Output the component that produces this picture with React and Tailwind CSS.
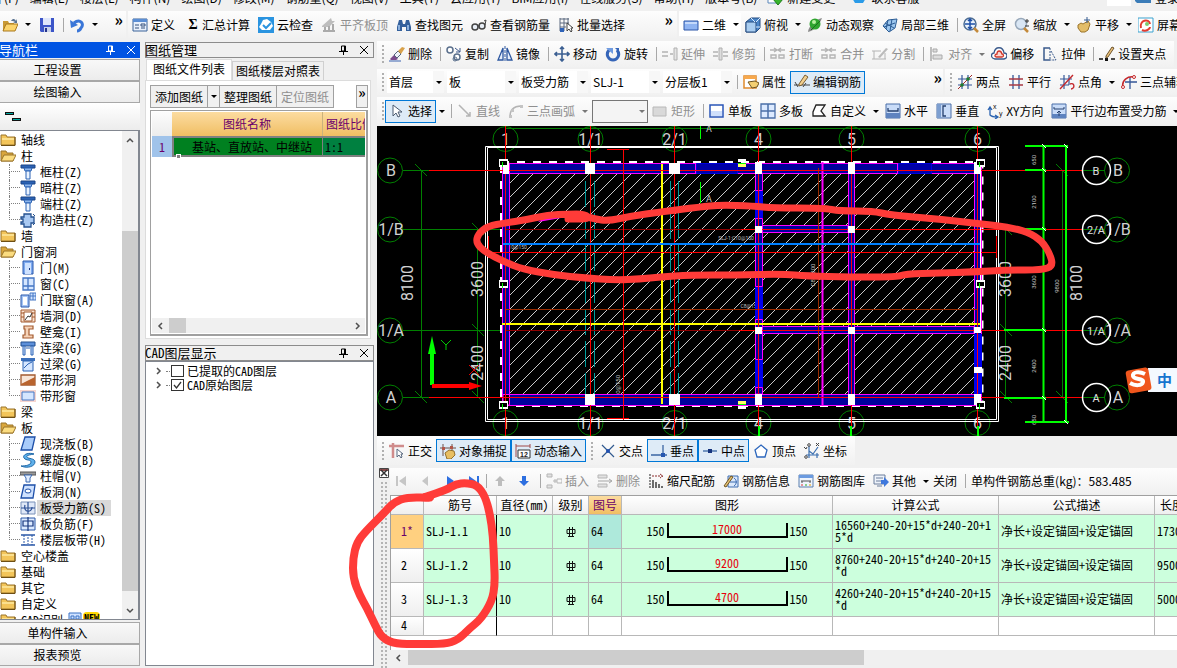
import { useState } from "react";

const UI_FONT = "font-['Noto_Sans_CJK_SC',sans-serif]";
const GRID_FONT = "font-['Noto_Sans_Mono_CJK_SC','Noto_Sans_CJK_SC',monospace]";

// 16x16 toolbar and tree glyphs
const ICONS = {
  open: <><path d="M1 4h5l1 2h5v8H1z" fill="#c99a35" /><path d="M1 14l3-7h12l-3 7z" fill="#fbd46c" stroke="#a9781c" /><path d="M9 4c2-3 4-2 5 0l1-2v4h-4l2-1c-1-1-2-1-4-1z" fill="#5a7391" /></>,
  save: <><path d="M1 1h14v14H2l-1-1z" fill="#3c55c8" /><path d="M4 1h8v7H4z" fill="#dfe6fa" /><path d="M5 10h7v5H5z" fill="#c9d2ea" /><path d="M6 11h2v4H6z" fill="#26348c" /></>,
  undo: <><path d="M5 6c6-5 11 1 7 5-1 2-3 3-4 3" fill="none" stroke="#3a76d8" strokeWidth="3" /><path d="M1 3l1 8 7-3z" fill="#3a76d8" /></>,
  define: <><path d="M1 2h14v12H1z" fill="#e8f0fb" stroke="#3b6298" /><path d="M1 2h14v3H1z" fill="#5b8ed4" /><path d="M3 8h4M3 11h4M9 7h4v2H9zM9 11h4" fill="none" stroke="#35507c" /></>,
  cloud: <><path d="M0 0h16v16H0z" fill="#2a94e0" /><path d="M4 13l-3-3 2-3 2-4 4-1 4 3 2 4-3 4z" fill="#fff" /><path d="M5 8l3 3 5-5" fill="none" stroke="#2a94e0" strokeWidth="2" /></>,
  flat: <><path d="M1 9l9-8 1 3h3l-6 6H1z" fill="#bdbdbd" /><path d="M4 10v4M8 9v6M12 7v8M2 14h12" stroke="#aaa" strokeWidth="2" /></>,
  find: <><path d="M3 3h3l1 4h2l1-4h3l2 7v4h-5v-4H6v4H1v-4z" fill="#34609c" /><path d="M3 8v5M12 8v5" stroke="#8bb0dd" strokeWidth="2" /></>,
  glasses: <><circle cx="4" cy="10" r="3" fill="#e8eef6" stroke="#444" strokeWidth="1.5" /><circle cx="11" cy="9" r="3" fill="#e8eef6" stroke="#444" strokeWidth="1.5" /><path d="M7 9h2M14 8l1-5-2 1" fill="none" stroke="#444" /></>,
  batch: <><path d="M2 2h9M2 6h9M2 10h6M2 1v13M6 1v13M10 1v6" fill="none" stroke="#5c6b80" /><path d="M2 11h4v4H2z" fill="#2e62b8" /><path d="M9 6v8l2-2 2 3 1-1-1-3h2z" fill="#fff" stroke="#444" /></>,
  plane: <><path d="M1 4h14v9H1z" fill="#8fb4f2" stroke="#2d56a8" /><path d="M2 5h12v2H2z" fill="#c4d9fb" /></>,
  cube: <><path d="M1 5l5-4h9v10l-4 4H1z" fill="#4b86c8" stroke="#274d80" /><path d="M1 5h10v10H1z" fill="#a9cdf0" stroke="#274d80" /><path d="M11 5l4-4M6 1l4 4M11 10h4" fill="none" stroke="#d6ebff" /></>,
  orbit: <><path d="M1 15c0-5 8-13 14-14-2 6-8 13-14 14z" fill="#8a8a8a" /><circle cx="8" cy="7" r="5.500" fill="#2fa52f" /><circle cx="7" cy="5" r="2" fill="#b8f0a0" /><path d="M4 13l9-9" stroke="#1b6f1b" /></>,
  part3d: <><path d="M1 9l5-6 9-1-2 9-6 4z" fill="#9cc6ee" stroke="#2a5b94" /><path d="M3 6l9 5M6 3l-2 9M10 2l-2 12M2 10l11-4" fill="none" stroke="#2a5b94" /></>,
  full: <><circle cx="7" cy="7" r="6" fill="#eaf2fb" stroke="#4d6d94" strokeWidth="1.500" /><path d="M7 2v10M2 7h10M5 4l2-2 2 2M5 10l2 2 2-2" fill="none" stroke="#1d4fa8" strokeWidth="1.500" /><path d="M11 11l4 4" stroke="#c48a3a" strokeWidth="2.500" /></>,
  zoom: <><circle cx="7" cy="7" r="5.500" fill="#d9e6f4" stroke="#98a8ba" strokeWidth="1.500" /><path d="M10 11l4 4" stroke="#c48a3a" strokeWidth="2.500" /><path d="M13 2v4M11 4h4M11 9h4" stroke="#333" /></>,
  hand: <><path d="M2 8l3-2 2 1 5-3 2 3-2 6-3 2H5l-3-4z" fill="#e3bd68" stroke="#9a742b" /><path d="M11 0v6M8 3h6" stroke="#355b8f" /></>,
  rotscr: <><path d="M0 1h15v14H0z" fill="#fff" stroke="#3ba2cf" /><path d="M3 11c-2-8 8-10 9-4M4 13c4 2 8-1 8-3" fill="none" stroke="#e23b30" strokeWidth="2" /><circle cx="9" cy="7" r="2" fill="#7bc96f" /></>,
  erase: <><path d="M1 13l4-4 4 4-2 1H2z" fill="#7d4b8c" /><path d="M5 9l4-4 3 3-4 4z" fill="#f0f3f8" stroke="#55647d" /><path d="M9 5l4-4 3 1-4 6z" fill="#d9a24b" /><path d="M0 15h12" stroke="#3a62b0" /></>,
  copy: <><circle cx="4" cy="4" r="3" fill="#fff" stroke="#5a6f8c" strokeWidth="1.500" /><circle cx="11" cy="11" r="3" fill="#fff" stroke="#5a6f8c" strokeWidth="1.500" /><circle cx="9" cy="13" r="2" fill="none" stroke="#5a6f8c" /><path d="M9 2l5 4M14 2v4h-4" fill="none" stroke="#3b568a" /></>,
  mirror: <><path d="M6 2v12H1zM10 2v12h5z" fill="#e6eefb" stroke="#2d57a0" strokeWidth="1.300" /><path d="M8 0v16" stroke="#2d57a0" strokeDasharray="3 1" /></>,
  move: <path d="M8 1v14M1 8h14M6 3l2-2 2 2M6 13l2 2 2-2M3 6L1 8l2 2M13 6l2 2-2 2" fill="none" stroke="#3b5f92" strokeWidth="1.600" />,
  rotate: <><path d="M4 4c-4 5 0 10 4 10s8-5 4-10" fill="none" stroke="#3565b8" strokeWidth="3" /><path d="M1 2h7v6z" fill="#6f9be0" /><path d="M10 2h4v4z" fill="#3565b8" /></>,
  extend: <><path d="M0 6h6M0 10h6M8 8h3" stroke="#b2b2b2" strokeWidth="1.500" /><path d="M12 2h3v12h-3z" fill="#e4e4e4" stroke="#b0b0b0" /></>,
  trim: <><path d="M0 6h5M0 10h5M10 6h5M10 10h5" stroke="#b2b2b2" strokeWidth="1.500" /><path d="M6 2h3v12H6z" fill="#ddd" stroke="#b0b0b0" /></>,
  brk: <path d="M0 4h6M4 2l3 2-3 2M9 4h6M11 2L8 4l3 2M1 9h5v3H1zM9 9h5v3H9z" fill="none" stroke="#b4b4b4" strokeWidth="1.400" />,
  split: <><path d="M0 5h9M0 13h14M2 5v8M13 7v6" stroke="#b4b4b4" /><path d="M6 11l8-9 2 1-8 9z" fill="#bbb" /></>,
  align: <><path d="M2 1v14" stroke="#aaa" strokeWidth="1.500" /><path d="M4 3h4v3H4zM4 9h9v4H4z" fill="#ddd" stroke="#aaa" /></>,
  offset: <><path d="M4 13c-5-1-4-6-1-6 1-7 9-7 10 0 4 0 4 5 0 6z" fill="#fff" stroke="#3a5a8c" strokeWidth="1.300" /><path d="M5 11c-2-1-1-3 1-3 0-4 4-4 5 0 2 0 2 3 0 3z" fill="#fbd6d0" stroke="#d0382c" strokeWidth="1.300" /></>,
  stretch: <><path d="M8 2H2v12h6" fill="none" stroke="#3a5a8c" strokeWidth="1.500" /><path d="M8 2v12M9 5l5 9H8" fill="none" stroke="#3a5a8c" strokeDasharray="2 1" /></>,
  grip: <><path d="M0 13h4M12 13h4" stroke="#111" strokeWidth="1.500" /><path d="M6 12h3v3H6z" fill="#111" /><path d="M7 10l6-9 2 1-6 9-2 1z" fill="#edc37c" stroke="#6b532c" /></>,
  prop: <><path d="M1 2h12v12H1z" fill="#fff" stroke="#e08a2c" strokeWidth="1.500" /><path d="M1 2h12v3H1z" fill="#f7a84c" /><path d="M5 8l7-1 4 2-2 4-5 1z" fill="#f3cf72" stroke="#6c5220" /></>,
  edit: <><path d="M0 11h16M1 8l3 5M9 13l3-4" fill="none" stroke="#444" /><path d="M5 10l6-9 3 2-6 8-3 1z" fill="#f2cf8e" stroke="#7a5f34" /></>,
  two: <><path d="M5 1v14M11 1v14M1 5h14M1 11h14" stroke="#355798" strokeWidth="1.200" /><path d="M1 15L15 1" stroke="#a02828" /><circle cx="5" cy="11" r="1.800" fill="#1c7a2c" /><circle cx="11" cy="5" r="1.800" fill="#1c7a2c" /></>,
  parallel: <><path d="M5 1v14M11 1v14" stroke="#355798" strokeWidth="1.300" /><path d="M1 5h14M1 11h14" stroke="#a83a44" strokeWidth="1.300" /></>,
  angle: <><path d="M5 1v14M10 1v10M1 5h12M1 11h9" stroke="#355798" strokeWidth="1.200" /><path d="M1 15L14 1M11 10c5-2 5 5 1 5" fill="none" stroke="#c5282c" strokeWidth="1.400" /></>,
  three: <><path d="M9 3v12M4 8h12" stroke="#355798" strokeWidth="1.300" /><path d="M2 14c-2-8 5-12 11-11" fill="none" stroke="#c5282c" strokeWidth="1.500" /><circle cx="2" cy="13" r="1.500" fill="#fff" stroke="#c5282c" /><circle cx="13" cy="3" r="1.500" fill="#fff" stroke="#c5282c" /></>,
  pick: <path d="M4 2v11l3-3 2 4 2-1-2-4h4z" fill="#fff" stroke="#4a5a70" />,
  line: <path d="M2 2l11 11M13 9v4H9" fill="none" stroke="#b4b4b4" strokeWidth="1.500" />,
  arc: <><path d="M2 14C2 7 6 3 13 3" fill="none" stroke="#b4b4b4" strokeWidth="1.500" /><path d="M1 12h3v3H1zM3 6h3v3H3zM12 2h3v3h-3z" fill="#c4c4c4" /></>,
  rect: <path d="M1 4h13v9H1z" fill="#d9d9d9" stroke="#b8b8b8" />,
  single: <><path d="M1 2h13v12H1z" fill="#fff" stroke="#2a56b8" strokeWidth="1.500" /><path d="M2 8h11v5H2z" fill="#cfdffb" /></>,
  multi: <><path d="M1 1h14v14H1z" fill="#dceaff" stroke="#4a6fa8" strokeWidth="1.300" /><path d="M8 1v14M1 8h14" stroke="#4a6fa8" strokeWidth="1.500" /></>,
  custom: <path d="M5 2h9l-4 6 4 5H2V9z" fill="#fff" stroke="#222" strokeWidth="1.300" />,
  horiz: <><path d="M1 1h14v14H1z" fill="#c9dcf8" stroke="#4a6fa8" /><path d="M1 10h14v5H1z" fill="#5e83bf" /><path d="M3 5v3h10V5" fill="none" stroke="#26406e" strokeWidth="1.300" /></>,
  vert: <><path d="M1 1h14v14H1z" fill="#c9dcf8" stroke="#4a6fa8" /><path d="M1 1h4v14H1z" fill="#7d9fd0" /><path d="M10 3H7v10h3" fill="none" stroke="#26406e" strokeWidth="1.300" /></>,
  xy: <><path d="M3 5v7c2 2 4 2 7 2M1 7l2-3 2 3M8 12l3 2-3 2" fill="none" stroke="#2a62b0" strokeWidth="1.300" /><text x="6" y="6" fontSize="7" fontFamily="Liberation Sans" fill="#111">x</text><text x="12" y="13" fontSize="7" fontFamily="Liberation Sans" fill="#111">y</text></>,
  edge: <><path d="M1 1h14v14H1z" fill="#c9dcf8" stroke="#4a6fa8" /><path d="M1 11h14v4H1z" fill="#5e83bf" /><path d="M3 4v2h10V4M8 13V8M6 10l2-2 2 2" fill="none" stroke="#26406e" /></>,
  ortho: <><path d="M0 3h15M4 0v15" stroke="#d08c8c" strokeWidth="2.500" /><path d="M8 6v8l2-2 2 3 1-1-1-3h2z" fill="#fff" stroke="#5a6a80" /></>,
  snap: <><path d="M0 5h16M3 1v12M12 1v7" stroke="#6b5148" /><path d="M2 4h3v3H2zM10 3h3v3h-3z" fill="#b0564a" /><path d="M5 10l4-3 5 1 1 4-4 4H7z" fill="#e8bf62" stroke="#94702c" /></>,
  dyn: <><path d="M1 1v13M15 1v4M1 3h14" fill="none" stroke="#a04848" /><path d="M3 7h12v8H3z" fill="#fff" stroke="#333" /><text x="5" y="14" fontSize="7" fontWeight="bold" fontFamily="Liberation Sans" fill="#222">12</text></>,
  cross: <><path d="M2 2l12 12M14 2L2 14" stroke="#30598f" strokeWidth="1.200" /><circle cx="8" cy="8" r="2" fill="#2050b0" /></>,
  perp: <><path d="M12 2v11M0 12h16" stroke="#3a66a4" strokeWidth="1.300" /><path d="M10 10h4v4h-4z" fill="#2456b0" /></>,
  mid: <><path d="M1 8h14" stroke="#3a66a4" strokeWidth="1.300" /><path d="M6 6h4v4H6z" fill="#16357e" /></>,
  vertex: <path d="M8 2l6 5-2 7H4L2 7z" fill="#fff" stroke="#2d67bd" strokeWidth="1.300" />,
  coord: <><path d="M5 1v14M2 12h13M5 8l4 3 5-7M13 10v5" fill="none" stroke="#3a6fb0" strokeWidth="1.200" /><circle cx="2" cy="14" r="1.300" fill="#fff" stroke="#444" /><circle cx="5" cy="2" r="1.300" fill="#fff" stroke="#444" /><path d="M12 0l3 3M15 0l-3 3M0 4l2 2 1-2" fill="none" stroke="#444" /></>,
  first: <path d="M2 3h2v10H2zM12 3v10L5 8z" fill="#c6c6c6" />,
  prev: <path d="M10 3v10L4 8z" fill="#c6c6c6" />,
  next: <path d="M5 3v10l7-5z" fill="#2d6fe0" />,
  last: <path d="M3 3v10l7-5zM11 3h2v10h-2z" fill="#2d6fe0" />,
  up: <path d="M8 3l5 5h-3v5H6V8H3z" fill="#bdbdbd" />,
  down: <path d="M8 13L3 8h3V3h4v5h3z" fill="#2d6fe0" />,
  insert: <><path d="M1 1h5v3H1zM1 12h5v3H1z" fill="#e2e2e2" stroke="#b5b5b5" /><path d="M7 8h4M9 6v4M11 6h5v4h-5z" fill="none" stroke="#b5b5b5" /></>,
  remove: <><path d="M1 2h9v3H1zM1 11h9v3H1z" fill="#e2e2e2" stroke="#b5b5b5" /><path d="M1 8h13M12 6l3 2-3 2" fill="none" stroke="#a5a5a5" /></>,
  scale: <><path d="M2 1v14" stroke="#222" strokeDasharray="2 1" /><path d="M4 3h10M12 1l3 2-3 2" fill="none" stroke="#8b2c2c" strokeDasharray="2 1" /><path d="M5 7v8M8 9v6M11 11v4M14 13v2" stroke="#222" strokeWidth="1.300" /></>,
  info: <><path d="M5 3h10v11H5z" fill="#dbe8fb" stroke="#3d6cb0" /><path d="M1 13L8 3l2 1-7 10z" fill="#e5c272" stroke="#6f5524" /><path d="M11 5c3 2 3 6 0 8M7 9h7" fill="none" stroke="#3d6cb0" /></>,
  lib: <><path d="M1 2h14v12H1z" fill="#eef4fc" stroke="#5b7fae" /><path d="M1 2h14v3H1z" fill="#6c9be0" /><path d="M3 8h10M4 8v2M12 8v2" stroke="#555" /><path d="M3 12h2" stroke="#d33" /><path d="M7 12h2" stroke="#2a2" /><path d="M11 12h2" stroke="#e90" /></>,
  other: <><path d="M1 2h11v9H1z" fill="#edf2fa" stroke="#6c7f9c" /><path d="M3 5h7M3 8h5M4 13h5" stroke="#6c7f9c" /><path d="M8 7h3V4l5 5-5 5v-3H8z" fill="#3f78dc" /></>,
  folder: <><path d="M1 3h5l1 2h8v8H1z" fill="#f3c55a" stroke="#9a742a" /><path d="M2 6h12v2H2z" fill="#fbe08e" /><path d="M1 13.500h14V5" fill="none" stroke="#6e4f14" /></>,
  folderOpen: <><path d="M1 3h5l1 2h6v8H1z" fill="#d9a63c" stroke="#9a742a" /><path d="M1 13l3-6h12l-3 6z" fill="#fbdc80" stroke="#9a742a" /></>,
  column: <><path d="M1 1h14v3H1z" fill="#2b62b4" stroke="#1d4585" /><path d="M4 4h8l-1 3H5z" fill="#8eb6ec" stroke="#2b62b4" /><path d="M6 7h4v8H6z" fill="#eaf3ff" stroke="#2b62b4" /></>,
  built: <><path d="M4 2h7v3h3v6h-3v4H4v-3H1v-2h2V7H1V5h3z" fill="#a9c9f2" stroke="#24508f" strokeWidth="1.300" /><path d="M13 2l2 2M13 13l2-2" stroke="#24508f" /></>,
  door: <><path d="M3 1h10v13H3z" fill="#7eaaf0" stroke="#2a58ac" /><path d="M5 3h6v11H5z" fill="#cfe2ff" /><path d="M9 8h1v2H9z" fill="#16357e" /></>,
  window: <><path d="M3 2h11v12H3z" fill="#d5e6ff" stroke="#4476c4" strokeWidth="1.300" /><path d="M8 2v12M3 10h11" stroke="#4476c4" strokeWidth="1.300" /></>,
  doorwin: <><path d="M1 3h8v12H1z" fill="#a7c6f5" stroke="#2a58ac" /><path d="M3 5h4v8H3z" fill="#fff" /><path d="M10 1h6v7h-6zM13 1v7M10 4h6" fill="#cfe2ff" stroke="#4476c4" /></>,
  wallhole: <><path d="M1 2h14v12H1z" fill="#fbe3d0" stroke="#a35b30" /><path d="M1 5h3M1 9h3M12 5h3M12 9h3M4 4h8v9H4z" fill="#fff" stroke="#a35b30" /><path d="M5 12l3-4 2 1 2-4" fill="none" stroke="#333" /></>,
  niche: <path d="M4 2h9v3H9v6h4v3H3v-3h2V5H4z" fill="#f6d3b8" stroke="#a35b30" strokeWidth="1.200" />,
  linkbeam: <><path d="M1 2h14v4H1z" fill="#5d90da" stroke="#24508f" /><path d="M3 6h2v9H3zM11 6h2v9h-2z" fill="#cfe2ff" stroke="#2b62b4" /><path d="M6 8h4" stroke="#2b62b4" /></>,
  lintel: <><path d="M1 2h14v3H1z" fill="#3b70bc" /><path d="M3 5h10v10H3z" fill="#d5e6ff" stroke="#2b62b4" /><path d="M4 12l4-4 4-2" fill="none" stroke="#2b62b4" /></>,
  striphole: <><path d="M1 3h14v10H1z" fill="#f8e6d8" stroke="#a35b30" strokeWidth="1.300" /><path d="M1 12l14-7v8H1z" fill="#b8642f" /></>,
  stripwin: <><path d="M0 2h16v12H0z" fill="#f6d5cf" /><path d="M2 4h12v8H2z" fill="#d5e6ff" stroke="#4476c4" /></>,
  slab: <path d="M5 1h10l-3 13H1z" fill="#a9ccfa" stroke="#1d4fa8" strokeWidth="1.300" />,
  spiral: <path d="M14 2C8 0 2 3 4 6s7 1 7 4-5 4-10 4c7 3 14 0 14-4s-7-3-8-5 3-2 7-3z" fill="#5eb0ea" stroke="#1f68a8" />,
  cap: <><path d="M0 4h16v3H0z" fill="#9a9a9a" stroke="#555" /><path d="M4 7h8l-2 3v4H6v-4z" fill="#e2eeff" stroke="#3a68b0" /></>,
  slabhole: <><path d="M4 1h11l-2 13H1z" fill="#cfe2ff" stroke="#1d4fa8" strokeWidth="1.300" /><ellipse cx="8" cy="7" rx="3" ry="2" fill="#fff" stroke="#1d4fa8" /></>,
  rebar: <><path d="M1 2h14v12H1z" fill="#dfe8f8" stroke="#7890b8" /><path d="M1 8h14M8 2v12M5 5c-2 8 7 8 7 2" fill="none" stroke="#2b4f94" strokeWidth="1.200" /></>,
  negbar: <><path d="M1 2h14v12H1z" fill="#dceaff" stroke="#2b58a8" /><path d="M8 1v14M3 5h10v5H3z" fill="none" stroke="#16357e" strokeWidth="1.200" /></>,
  band: <><path d="M1 3h14M1 13h14" stroke="#2b58a8" strokeWidth="1.500" /><path d="M4 3v10M12 3v10M8 5v7" stroke="#2b58a8" strokeDasharray="2 1" /></>,
  newdoc: <><path d="M1 0h10v13H1z" fill="#fff" stroke="#5b87ba" /><path d="M9 5h4v4h3l-5 6-5-6h3z" fill="#38b52c" stroke="#1e7a18" /></>,
  qq: <><path d="M3 0h10l2 8-3 5H4L1 8z" fill="#2a9be8" /><path d="M5 4h6v5H5z" fill="#fff" /></>,
  user: <><path d="M0 0h16v13H2l-2-2z" fill="#3b7cb8" /><path d="M4 3h9v6H6z" fill="#fff" /></>,
};

function Icon({ name }) {
  return <svg viewBox="0 0 16 16" className="h-4 w-4 shrink-0" aria-hidden="true">{ICONS[name]}</svg>;
}

function Tool({ icon, label, active, disabled }) {
  return (
    <button
      disabled={disabled}
      aria-label={label || icon}
      className={`flex h-[23px] shrink-0 items-center gap-[3px] whitespace-nowrap ${active ? "border border-[#0078d7] bg-[#deebf7] px-[3px]" : "px-1"} ${disabled ? "text-[#8f8f8f]" : "text-black"}`}
    >
      {icon === "sigma" ? <b className="ml-1 w-[12px] text-center font-['Liberation_Serif',serif] text-[14px]">Σ</b> : <Icon name={icon} />}
      {label}
    </button>
  );
}

function Arrow({ dim }) {
  return (
    <button aria-label="更多" className="flex h-[22px] w-[11px] shrink-0 items-center justify-center">
      <svg viewBox="0 0 6 3" className={`h-[3px] w-[6px] ${dim ? "text-[#777]" : "text-black"}`}><path d="M0 0h6L3 3z" fill="currentColor" /></svg>
    </button>
  );
}

const Sep = () => <span className="ml-1 mr-px h-[14px] w-px shrink-0 bg-[#a8a8a8]" />;
const Grip = () => <span className="ml-[5px] mr-px h-[18px] shrink-0 border-l-2 border-dotted border-[#b0b0b0]" />;
const Strip = ({ className = "", children }) => (
  <div className={`flex h-full items-center bg-linear-to-b from-[#fdfdfd] to-[#f1f1f1] ${className}`}>{children}</div>
);
const More = () => <button aria-label="展开" className="self-start text-[16px] font-bold leading-4">»</button>;

function Combo({ value, label, first }) {
  return (
    <div className={`flex h-[22px] shrink-0 items-center bg-white ${first ? "ml-[2px] w-[57px]" : "ml-[3px] w-[69px]"}`}>
      <select aria-label={label} className="min-w-0 flex-1 appearance-none pl-[2px] leading-4 outline-none">
        <option>{value}</option>
      </select>
      <span className="flex h-full w-[11px] items-center bg-[#f7f7f7]"><Arrow /></span>
    </div>
  );
}

const MENUS = ["文件(F)", "编辑(E)", "楼层(L)", "构件(N)", "绘图(D)", "修改(M)", "钢筋量(Q)", "视图(V)", "工具(T)", "云应用(Y)", "BIM应用(I)", "在线服务(S)", "帮助(H)", "版本号(B)"];

function MenuBar() {
  return (
    <nav className="flex h-[11px] shrink-0 items-end overflow-hidden pb-[5px]">
      <div className="-ml-[25px] flex items-center gap-px">
        {MENUS.map((m) => <button key={m} className="whitespace-nowrap px-[5px] leading-4">{m}</button>)}
        <button className="flex items-center gap-1 whitespace-nowrap pl-1 leading-4"><Icon name="newdoc" />新建变更</button>
        <button className="ml-[15px] flex items-center gap-1 whitespace-nowrap leading-4"><Icon name="qq" />联系客服</button>
      </div>
      <span className="ml-auto h-4 w-6 shrink-0 bg-white" />
      <button className="ml-1 flex w-[42px] shrink-0 items-center gap-1 whitespace-nowrap leading-4"><Icon name="user" />登录</button>
    </nav>
  );
}

function MainToolbar() {
  return (
    <div className="flex h-[30px] shrink-0 items-center gap-[2px] overflow-hidden pb-[3px]">
      <Strip className="w-[126px] shrink-0">
        <span className="-ml-[2px] flex"><Tool icon="open" /></span>
        <Arrow />
        <span className="ml-[2px] flex"><Tool icon="save" /></span>
        <Sep />
        <Tool icon="undo" />
        <Arrow />
        <span className="ml-auto mr-[3px] flex h-full"><More /></span>
      </Strip>
      <Strip className="w-[549px] shrink-0">
        <Tool icon="define" label="定义" />
        <Tool icon="sigma" label="汇总计算" />
        <Tool icon="cloud" label="云检查" />
        <Tool icon="flat" label="平齐板顶" disabled />
        <Tool icon="find" label="查找图元" />
        <Tool icon="glasses" label="查看钢筋量" />
        <Tool icon="batch" label="批量选择" />
        <span className="ml-auto mr-[4px] flex h-full"><More /></span>
      </Strip>
      <Strip className="flex-1">
        <span className="flex items-center bg-white"><Tool icon="plane" label="二维" /><Arrow /></span>
        <Tool icon="cube" label="俯视" />
        <Arrow />
        <Tool icon="orbit" label="动态观察" />
        <Tool icon="part3d" label="局部三维" />
        <Sep />
        <Tool icon="full" label="全屏" />
        <Tool icon="zoom" label="缩放" />
        <Arrow />
        <Tool icon="hand" label="平移" />
        <Arrow />
        <Tool icon="rotscr" label="屏幕旋转" />
      </Strip>
    </div>
  );
}

function PanelTitle({ children, active }) {
  return (
    <div className={`flex h-4 shrink-0 items-center text-[13px] leading-4 ${active ? "bg-[#0054e3] text-white" : "border border-[#8c8c8c] bg-[#f0f0f0]"}`}>
      <span className="-ml-px flex-1">{children}</span>
      <button aria-label="固定" className="mr-[12px]">
        <svg viewBox="0 0 9 10" className="h-[10px] w-[9px]"><path d="M2.500 1h4v5h-4zM5.500 1v5M0 6.500h9M4.500 7v3" fill="none" stroke="currentColor" /></svg>
      </button>
      <button aria-label="关闭" className="mr-[5px]">
        <svg viewBox="0 0 8 8" className="h-2 w-2"><path d="M0 0l8 8M8 0L0 8" fill="none" stroke="currentColor" /></svg>
      </button>
    </div>
  );
}

const TREE = [
  { label: "轴线" },
  { label: "柱", children: [["column", "框柱(Z)"], ["column", "暗柱(Z)"], ["column", "端柱(Z)"], ["built", "构造柱(Z)"]] },
  { label: "墙" },
  { label: "门窗洞", children: [["door", "门(M)"], ["window", "窗(C)"], ["doorwin", "门联窗(A)"], ["wallhole", "墙洞(D)"], ["niche", "壁龛(I)"], ["linkbeam", "连梁(G)"], ["lintel", "过梁(G)"], ["striphole", "带形洞"], ["stripwin", "带形窗"]] },
  { label: "梁" },
  { label: "板", children: [["slab", "现浇板(B)"], ["spiral", "螺旋板(B)"], ["cap", "柱帽(V)"], ["slabhole", "板洞(N)"], ["rebar", "板受力筋(S)"], ["negbar", "板负筋(F)"], ["band", "楼层板带(H)"]] },
  { label: "空心楼盖" },
  { label: "基础" },
  { label: "其它" },
  { label: "自定义" },
  { label: "CAD识别", isNew: true },
];

function Tree() {
  const [selected, setSelected] = useState("板受力筋(S)");
  return (
    <ul className="min-w-0 flex-1 overflow-hidden pt-px leading-4">
      {TREE.map((node) => (
        <li key={node.label}>
          <button className="flex h-4 items-center gap-[5px]">
            <Icon name={node.children ? "folderOpen" : "folder"} />
            {node.label}
            {node.isNew && (
              <span className="flex h-4 items-start gap-px">
                <svg viewBox="0 0 14 14" className="h-[14px] w-[14px]"><path d="M1 1h12v12H1z" fill="#cfe2ff" stroke="#3b72c4" /><path d="M3 4h3v8M3 12V4M8 12V4h3v8M3 7h3M8 7h3" fill="none" stroke="#3b72c4" /></svg>
                <b className="rounded bg-[#ffd800] px-px text-[10px] leading-[11px]">NEW</b>
              </span>
            )}
          </button>
          {node.children && (
            <ul>
              {node.children.map(([icon, label], i) => (
                <li key={label} className="flex h-4">
                  <span className="ml-[9px] flex w-[11px] flex-col">
                    <span className="h-1/2 border-b border-l border-dotted border-[#808080]" />
                    {i < node.children.length - 1 && <span className="h-1/2 border-l border-dotted border-[#808080]" />}
                  </span>
                  <button onClick={() => setSelected(label)} className="flex items-center gap-px">
                    <Icon name={icon} />
                    <span className={`whitespace-nowrap pl-[3px] pr-[5px] ${selected === label ? "bg-[#d9d9d9]" : ""}`}>{label}</span>
                  </button>
                </li>
              ))}
            </ul>
          )}
        </li>
      ))}
    </ul>
  );
}

function Chevron({ dir }) {
  const d = { up: "M1 6l3-3 3 3", down: "M1 3l3 3 3-3", left: "M5 1L2 4l3 3", right: "M3 1l3 3-3 3" }[dir];
  return <svg viewBox="0 0 8 8" className="h-2 w-2"><path d={d} fill="none" stroke="#505050" strokeWidth="1.500" /></svg>;
}

const NavButton = ({ children }) => (
  <button className="h-[22px] w-full shrink-0 border border-l-0 border-[#a8a8a8] bg-linear-to-b from-[#f8f8f8] to-[#ececec] pr-6 text-center leading-4">{children}</button>
);

function NavPanel() {
  return (
    <aside className={`flex w-[140px] shrink-0 flex-col pb-[2px] ${GRID_FONT}`}>
      <div className="mt-px flex flex-col"><PanelTitle active>导航栏</PanelTitle></div>
      <div className="mt-px flex flex-col">
        <NavButton>工程设置</NavButton>
        <NavButton>绘图输入</NavButton>
      </div>
      <div className="h-[27px] shrink-0 bg-linear-to-b from-white to-[#ececec] pl-[5px] pt-[9px]">
        <svg viewBox="0 0 16 10" className="h-[10px] w-4"><path d="M0 0h9v3H0zM7 6h9v3H7z" fill="#111" /><path d="M1 1h7v1H1zM8 7h7v1H8z" fill="#00a8a0" /></svg>
      </div>
      <div className="flex min-h-0 flex-1 border-r-2 border-t border-b border-[#828790] bg-white">
        <Tree />
        <div className="flex w-[16px] shrink-0 flex-col bg-[#f0f0f0]">
          <button aria-label="向上" className="flex h-[18px] items-center justify-center"><Chevron dir="up" /></button>
          <div className="mt-[82px] flex-1 bg-[#cdcdcd]" />
          <button aria-label="向下" className="mt-[10px] flex h-[18px] items-center justify-center"><Chevron dir="down" /></button>
        </div>
      </div>
      <div className="mt-[2px] flex flex-col">
        <NavButton>单构件输入</NavButton>
        <NavButton>报表预览</NavButton>
      </div>
    </aside>
  );
}

function DrawingPanel() {
  return (
    <section className="flex h-[297px] shrink-0 flex-col">
      <PanelTitle>图纸管理</PanelTitle>
      <div role="tablist" className="mt-px flex h-[21px] shrink-0 items-end px-px">
        <button role="tab" aria-selected="true" className="h-full border border-b-0 border-[#dcdcdc] bg-white px-[6px] pb-[2px]">图纸文件列表</button>
        <button role="tab" className="h-[19px] border border-b-0 border-[#d0d0d0] px-[3px]">图纸楼层对照表</button>
      </div>
      <div className="mr-[3px] flex min-h-0 flex-1 flex-col border border-[#dcdcdc] bg-white p-1 pb-[2px] pr-[2px]">
        <div className="flex h-[23px] shrink-0 bg-[#f0f0f0]">
          <button className="border border-[#a0a0a0] px-1">添加图纸</button>
          <button aria-label="更多" className="flex w-[12px] items-center justify-center border border-l-0 border-[#a0a0a0]"><svg viewBox="0 0 6 3" className="h-[3px] w-[6px]"><path d="M0 0h6L3 3z" /></svg></button>
          <button className="border border-l-0 border-[#a0a0a0] px-1">整理图纸</button>
          <button disabled className="border border-l-0 border-[#a0a0a0] px-1 text-[#8f8f8f]">定位图纸</button>
          <span className="flex-1 bg-white" />
          <button aria-label="展开" className={`flex w-[12px] justify-center border border-[#a0a0a0] text-[14px] font-bold leading-3 ${UI_FONT}`}>»</button>
        </div>
        <div className="mt-[2px] flex min-h-0 flex-1 flex-col overflow-hidden border border-b-2 border-r-2 border-[#a0a0a0] p-px">
          <div className="flex-1 overflow-hidden">
            <table className="w-[260px] table-fixed border-separate border-spacing-0">
              <colgroup><col className="w-[20px]" /><col className="w-[151px]" /><col /></colgroup>
              <thead>
                <tr className="h-[24px] text-[#6b006b]">
                  <th className="bg-linear-to-b from-[#fcfcfc] to-[#ececec]" />
                  <th className="border-r border-[#c9b27c] bg-linear-to-b from-[#fcdca0] to-[#f0be62] font-normal">图纸名称</th>
                  <th className="bg-linear-to-b from-[#fcdca0] to-[#f0be62] pl-[3px] text-left font-normal">图纸比例</th>
                </tr>
              </thead>
              <tbody>
                <tr className="h-[21px]">
                  <td className="bg-[#a0c3ea] text-center leading-4 text-[#6b006b]">1</td>
                  <td className="relative border-y-2 border-l-2 border-r border-[#808080] bg-[#008020] pl-2 text-center leading-4">
                    基站、直放站、中继站
                    <span className="absolute -bottom-[4px] left-[2px] h-[5px] w-[5px] border border-white bg-[#808080]" />
                  </td>
                  <td className="border-y-2 border-[#808080] bg-[#008040] pl-[2px] leading-4">1:1</td>
                </tr>
              </tbody>
            </table>
          </div>
          <div className="flex h-[15px] shrink-0 items-center bg-[#f0f0f0]">
            <button aria-label="向左" className="flex w-[17px] justify-center"><Chevron dir="left" /></button>
            <div className="h-full w-[17px] bg-[#cdcdcd]" />
            <button aria-label="向右" className="ml-auto flex w-[17px] justify-center"><Chevron dir="right" /></button>
          </div>
        </div>
      </div>
    </section>
  );
}

function LayerRow({ label, checked }) {
  const [on, setOn] = useState(checked);
  return (
    <label className="flex h-[14px] items-center leading-[14px]">
      <Chevron dir="right" />
      <span className="ml-[4px] mr-px w-1 border-t border-dotted border-[#808080]" />
      <span className="relative mr-[3px] flex h-[12px] w-[13px]">
        <input type="checkbox" checked={on} onChange={() => setOn(!on)} className="h-[12px] w-[13px] appearance-none border border-[#333] bg-white" />
        {on && <svg viewBox="0 0 13 12" className="pointer-events-none absolute inset-0 h-[12px] w-[13px]"><path d="M3 6l2.500 3L10 3" fill="none" stroke="#333" strokeWidth="1.300" /></svg>}
      </span>
      {label}
    </label>
  );
}

function MiddleColumn() {
  return (
    <div className={`ml-[5px] flex w-[229px] shrink-0 flex-col pb-[2px] pt-px ${GRID_FONT}`}>
      <DrawingPanel />
      <div className="mt-[6px] flex flex-col"><PanelTitle>CAD图层显示</PanelTitle></div>
      <div className="flex-1 border border-[#828790] bg-white pl-[8px] pt-[2px]">
        <LayerRow label="已提取的CAD图层" checked={false} />
        <LayerRow label="CAD原始图层" checked />
      </div>
    </div>
  );
}

function DrawToolbars() {
  return (
    <div className="flex shrink-0 flex-col overflow-hidden">
      <div className="flex h-[28px] pb-[2px]">
        <Strip className="pr-1">
          <Grip />
          <Tool icon="erase" label="删除" />
          <Sep />
          <Tool icon="copy" label="复制" />
          <Tool icon="mirror" label="镜像" />
          <Sep />
          <Tool icon="move" label="移动" />
          <Tool icon="rotate" label="旋转" />
          <Sep />
          <Tool icon="extend" label="延伸" disabled />
          <Tool icon="trim" label="修剪" disabled />
          <Sep />
          <Tool icon="brk" label="打断" disabled />
          <Tool icon="brk" label="合并" disabled />
          <Tool icon="split" label="分割" disabled />
          <Sep />
          <Tool icon="align" label="对齐" disabled />
          <Arrow dim />
          <Tool icon="offset" label="偏移" />
          <Tool icon="stretch" label="拉伸" />
          <Sep />
          <Tool icon="grip" label="设置夹点" />
        </Strip>
      </div>
      <div className="flex h-[28px] gap-[2px] pb-[2px]">
        <Strip className="w-[566px] shrink-0">
          <Grip />
          <Combo first label="楼层" value="首层" />
          <Combo label="构件类型" value="板" />
          <Combo label="构件" value="板受力筋" />
          <Combo label="构件名称" value="SLJ-1" />
          <Combo label="分层" value="分层板1" />
          <span className="ml-px flex items-center"><Sep /></span>
          <Tool icon="prop" label="属性" />
          <Tool icon="edit" label="编辑钢筋" active />
          <span className="ml-auto mr-px flex h-full"><More /></span>
        </Strip>
        <Strip className="flex-1">
          <Grip />
          <Tool icon="two" label="两点" />
          <Tool icon="parallel" label="平行" />
          <Tool icon="angle" label="点角" />
          <Arrow />
          <Tool icon="three" label="三点辅轴" />
        </Strip>
      </div>
      <div className="flex h-[29px] pb-px">
        <Strip className="flex-1">
          <Grip />
          <Tool icon="pick" label="选择" active />
          <Arrow />
          <Sep />
          <Tool icon="line" label="直线" disabled />
          <Tool icon="arc" label="三点画弧" disabled />
          <Arrow dim />
          <div className="ml-[2px] flex h-[23px] w-[56px] shrink-0 items-center border border-[#767676] bg-[#f4f4f4]">
            <select aria-label="画弧方式" className="min-w-0 flex-1 appearance-none" />
            <Arrow dim />
          </div>
          <Tool icon="rect" label="矩形" disabled />
          <Sep />
          <Tool icon="single" label="单板" />
          <Tool icon="multi" label="多板" />
          <Tool icon="custom" label="自定义" />
          <Arrow />
          <Tool icon="horiz" label="水平" />
          <Tool icon="vert" label="垂直" />
          <Tool icon="xy" label="XY方向" />
          <Tool icon="edge" label="平行边布置受力筋" />
          <Arrow />
        </Strip>
      </div>
    </div>
  );
}

// curve through the midpoints of a hand-drawn point list
function smooth(points) {
  const n = points.length;
  const mid = (a, b) => `${(a[0] + b[0]) / 2} ${(a[1] + b[1]) / 2}`;
  let d = `M${points[0].join(" ")}L${mid(points[0], points[1])}`;
  for (let i = 1; i < n - 1; i++) d += `Q${points[i].join(" ")} ${mid(points[i], points[i + 1])}`;
  return d + `L${points[n - 1].join(" ")}`;
}

const BAR_MARK = [
  [568, 219], [590, 219], [585, 214], [568, 214], [548, 215], [525, 220], [505, 223], [488, 226], [478, 234], [476, 243], [485, 252],
  [505, 262], [522, 269], [555, 275], [585, 278], [615, 280], [640, 279], [660, 277], [690, 275], [735, 275], [783, 274], [807, 276],
  [850, 277], [897, 277], [905, 274], [940, 273], [972, 272], [1008, 270], [1042, 270], [1053, 266], [1050, 254], [1042, 241],
  [1028, 232], [1008, 227], [982, 224], [938, 219], [890, 215], [873, 211], [840, 211], [823, 208], [773, 208], [753, 206], [720, 205],
  [700, 207], [660, 212], [632, 216], [608, 221], [595, 219], [580, 215],
];
const NAME_MARK = [
  [77, 21], [85, 22], [60, 21], [46, 26], [36, 37], [18, 55], [9, 66], [5, 82], [5, 102], [12, 120], [19, 132], [27, 149], [34, 162],
  [48, 168], [70, 168], [97, 168], [110, 164], [122, 152], [133, 143], [144, 125], [147, 108], [146, 85], [145, 60], [142, 38],
  [137, 20], [129, 9], [118, 7], [108, 8], [98, 14], [77, 21],
];

const AXIS_X = [[505.5, "1"], [590.5, "1/1"], [674.5, "2/1"], [758.5, "4"], [851.5, "5"], [977.5, "6"]];
const AXIS_Y = [[170.5, "B", "B"], [229.5, "1/B", "2/A"], [330.5, "1/A", "1/A"], [397.5, "A", "A"]];
const BIG_DIMS = [[407, 283, "8100"], [477, 279, "3600"], [477, 363, "2400"], [1005, 279, "3600"], [1005, 363, "2400"], [1076, 283, "8100"]];
const SMALL_DIMS = [[1034, 160, "650"], [1034, 202, "2100"], [1034, 282, "3600"], [1034, 366, "2400"], [1034, 420, "650"], [1057, 286, "9800"], [813, 275, "C8@200"], [618, 388, "C10@150"]];
const COLUMNS = [[585, 163, 10, 11], [669, 163, 11, 11], [755, 162, 7, 12], [848, 162, 7, 12], [974, 162, 7, 12], [503, 162, 6, 12], [585, 394, 10, 11], [669, 394, 11, 11], [755, 394, 7, 11], [848, 394, 7, 11], [974, 394, 7, 11], [755, 226, 7, 7], [848, 226, 7, 7], [755, 327, 7, 7], [848, 327, 7, 7], [974, 327, 7, 6], [974, 367, 8, 6]];
const HANDLES = [[499, 159], [976, 159], [499, 401], [976, 401], [499, 280], [976, 280]];

// drawing area, in plan coordinates
function Plan() {
  return (
    <svg viewBox="377 126 800 310" preserveAspectRatio="xMinYMin slice" className="block h-[310px] w-full bg-black" fontFamily="Roboto, sans-serif" fill="none">
      <defs>
        <pattern id="hatch" width="14" height="14" patternUnits="userSpaceOnUse" patternTransform="translate(7 0)">
          <path d="M-1 15L15 -1" stroke="#c8c8c8" />
        </pattern>
      </defs>
      <path d="M510 174H974V394H510z" fill="url(#hatch)" />

      <g stroke="#008000">
        <path d="M505 128.500H977M421.500 170V398M477.500 229V398M403 170.500H429M403 229.500H505M403 330.500H505M403 397.500H429M1005.500 229V398M1062.500 171V398M1083 170.500h22M1083 229.500h22M1083 330.500h22M1083 397.500h22" />
        <path d="M415 164l12 12M472 223l12 12M472 324l12 12M415 391l12 12M472 391l12 12M1000 223l12 12M1000 324l12 12M1000 391l12 12M1056 164l12 12M1056 391l12 12" />
        {AXIS_X.map(([x]) => <g key={x}><circle cx={x} cy="139" r="12.500" /><circle cx={x} cy="423" r="12.500" /></g>)}
        {AXIS_Y.map(([y]) => <g key={y}><circle cx="390" cy={y} r="12.500" /><circle cx="1117" cy={y} r="12.500" /></g>)}
      </g>

      <g fill="#d0d0d0" fontSize="16" textAnchor="middle">
        {AXIS_X.map(([x, t]) => <g key={x}><text x={x} y="145">{t}</text><text x={x} y="429">{t}</text></g>)}
        {AXIS_Y.map(([y, t]) => <g key={y}><text x="391" y={y + 5}>{t}</text><text x="1118" y={y + 5}>{t}</text></g>)}
        {BIG_DIMS.map(([x, y, t]) => <text key={x + t} x={x} y={y + 6} transform={`rotate(-90 ${x} ${y})`}>{t}</text>)}
      </g>
      <g fill="#c0c0c0" fontSize="6" textAnchor="middle">
        {SMALL_DIMS.map(([x, y, t]) => <text key={y + t} x={x} y={y + 2} transform={`rotate(-90 ${x} ${y})`}>{t}</text>)}
        <text x="516" y="249" fontSize="5">C10@150</text>
        <text x="736" y="240" fontSize="5">SLJ-1:C10@150</text>
        <text x="750" y="308" fontSize="5">C8@150</text>
      </g>

      <path d="M485.500 146.500H998.500V421.500H485.500zM487.500 147.500H996.500V419.500H487.500z" stroke="#fff" />
      <path d="M501 162H982.500V406H501z" stroke="#fff" strokeWidth="2" strokeDasharray="8 8" />

      {/* walls */}
      <g fill="#00009c" stroke="#f0f">
        <path d="M503 163.500H981V173.500H503zM503 394.500H981V405.500H503zM502.500 163V405H509.500V163zM974.500 163V405H981.500V163zM762 225.500H848V232.500H762zM762 326.500H974V333.500H762z" />
        <path d="M755.500 173V190.500H762.500V173zM755.500 218.500H762.500V286.500H755.500zM755.500 319.500H762.500V359.500H755.500zM755.500 387.500H762.500V394H755.500zM848.500 163V405H854.500V163z" />
      </g>
      <path d="M755 191h8v27h-8zM755 287h8v32h-8zM755 360h8v27h-8zM974 334h8v60h-8z" fill="#0000ee" />
      <path d="M695.500 164v9M737.500 164v9M897.500 164v9M931.500 164v9" stroke="#f0f" />
      <path d="M696.500 163.500h41v10h-41zM898.500 163.500h33v10h-33z" fill="#0000a8" stroke="#0000e0" />

      <path d="M585.500 181V394M594.500 181V394M670.500 181V394M678.500 181V394" stroke="#009c9c" strokeDasharray="26 6" />
      <path d="M505 229.500H741M505 330.500H739" stroke="#900000" />
      <path d="M505 309.500H977M818.500 168V398" stroke="#9a2c00" />
      <path d="M822.500 162V405" stroke="#f0f" strokeWidth="2" />
      <path d="M502 324H981M662 164V404" stroke="#ff0" strokeWidth="2" />
      <g stroke="#f00">
        <path d="M429 170.500H1083M741 229.500H1083M739 330.500H1083M429 397.500H1083M489 252.500H996M623.500 149V420M607 149.500h22M607 418.500h22" />
        <path d="M505.500 126V436M590.500 126V436M674.500 126V436M758.500 126V436M851.500 126V436M977.500 126V436M488.500 236V258M996.500 236V258" />
      </g>
      <path d="M503 244H981" stroke="#0080ff" strokeWidth="2" />
      <path d="M538 222l7-5 16 1z" fill="#f0f" />
      <path d="M980.500 170V330" stroke="#fff" />

      <g fill="#fff">{COLUMNS.map(([x, y, w, h]) => <rect key={`${x}-${y}`} x={x} y={y} width={w} height={h} />)}</g>
      {HANDLES.map(([x, y]) => <g key={`${x}-${y}`}><path d={`M${x} ${y}h9v8h-9z`} fill="#fff" /><path d={`M${x + 1} ${y + 2}h7v4h-7z`} fill="#000" /><path d={`M${x + 3.5} ${y + 3}v5`} stroke="#0f0" /></g>)}
      <path d="M738 159h8v3h-8zM738 406h8v3h-8z" fill="#fff" />
      <path d="M738 163h8v4h-8zM738 401h8v3h-8z" fill="#ff6" />
      <path d="M738 163.500h8M738 404.500h8M700.500 126v13M700.500 182v21" stroke="#0f0" />
      <text x="706" y="132" fill="#c8c8c8" fontSize="9">A</text>
      <text x="706" y="202" fill="#c8c8c8" fontSize="9">A</text>

      {/* right-hand dimension chain */}
      <path d="M1043.500 146V422M1066 146V422M1025 146H1068M1025 170H1046M1025 229H1046M1004 330H1046M1004 398H1046M1025 422H1069M759 426v10M851 426v10M978 426v10" stroke="#0f0" strokeWidth="2" />
      <path d="M1042 144l4 4M1042 168l4 4M1042 227l4 4M1042 328l4 4M1042 396l4 4M1064 144l4 4M1064 420l4 4" stroke="#fff" />
      <g fontSize="11" textAnchor="middle">
        {AXIS_Y.map(([y, , t]) => <g key={y}><circle cx="1096.500" cy={y} r="14" stroke="#fff" strokeWidth="1.500" /><text x="1096" y={y + 4} fill="#e0e0e0">{t}</text></g>)}
      </g>

      {/* ucs */}
      <path d="M432 385V350" stroke="#0f0" strokeWidth="4" />
      <path d="M428 354h8l-4-18z" fill="#0f0" />
      <path d="M432 386H472" stroke="#f00" strokeWidth="4" />
      <path d="M469 382v8l13-4z" fill="#f00" />
      <path d="M441 340l5 5 5-5M446 345v5" stroke="#0c0" />
      <path d="M469 365l10 10M479 365l-10 10" stroke="#d00" />

      <path d={smooth(BAR_MARK)} stroke="#ff3b38" strokeWidth="7" strokeLinejoin="round" strokeLinecap="round" />
    </svg>
  );
}

function ImeBar() {
  return (
    <div className="absolute right-0 top-[240px] flex h-[28px] items-center">
      <svg viewBox="0 0 28 28" className="z-10 -mr-1 h-7 w-7"><rect x="3" y="3" width="23" height="23" rx="3" fill="#f0561d" transform="rotate(-10 14 14)" /><path d="M21 8c-6-3-13-2-12 2s11 2 10 6-8 4-13 1" fill="none" stroke="#fff" strokeWidth="4" /></svg>
      <span className="flex h-6 w-[29px] items-center justify-center bg-[#f4f9ff] pl-1 text-[15px] font-bold text-[#1674cf]">中</span>
    </div>
  );
}

function SnapBar() {
  return (
    <div className="flex h-[30px] shrink-0 pb-px">
      <Strip className="pr-1">
        <Grip />
        <Tool icon="ortho" label="正交" />
        <Tool icon="snap" label="对象捕捉" active />
        <Tool icon="dyn" label="动态输入" active />
        <Grip />
        <span className="ml-[2px] flex"><Tool icon="cross" label="交点" /></span>
        <Tool icon="perp" label="垂点" active />
        <Tool icon="mid" label="中点" active />
        <Tool icon="vertex" label="顶点" />
        <Tool icon="coord" label="坐标" />
      </Strip>
    </div>
  );
}

const ROWS = [
  { no: "1*", name: "SLJ-1.1", len: "17000", formula: "16560+240-20+15*d+240-20+15*d", total: "17300" },
  { no: "2", name: "SLJ-1.2", len: "9200", formula: "8760+240-20+15*d+240-20+15*d", total: "9500" },
  { no: "3", name: "SLJ-1.3", len: "4700", formula: "4260+240-20+15*d+240-20+15*d", total: "5000" },
];
const HEADS = ["", "筋号", "直径(mm)", "级别", "图号", "图形", "计算公式", "公式描述", "长度(mm)"];

function RebarTable() {
  const cell = "border-b border-r border-[#b8b8b8] px-[2px] pt-0 pb-[2px]";
  return (
    <table className={`w-[840px] min-w-full table-fixed border-separate border-spacing-0 leading-3 ${GRID_FONT}`}>
      <colgroup>
        <col className="w-[33px]" /><col className="w-[73px]" /><col className="w-[56px]" /><col className="w-[36px]" /><col className="w-[33px]" />
        <col className="w-[211px]" /><col className="w-[166px]" /><col className="w-[156px]" /><col />
      </colgroup>
      <thead>
        <tr className="h-[19px]">
          {HEADS.map((h) => (
            <th key={h} className={`whitespace-nowrap border-b border-r border-[#b8b8b8] p-0 font-normal ${h === "图号" ? "bg-linear-to-b from-[#fcdca0] to-[#f0be62] text-[#6b006b]" : "bg-linear-to-b from-white to-[#efefef]"} ${h === "长度(mm)" ? "pl-[5px] text-left" : ""}`}>{h}</th>
          ))}
        </tr>
      </thead>
      <tbody>
        {ROWS.map((r, i) => (
          <tr key={r.no} className="h-[34px] bg-[#ccffdd]">
            <td className={`${cell} text-center ${i === 0 ? "bg-[#ffd080] text-[#6b006b]" : "bg-linear-to-b from-white to-[#efefef] pr-[8px]"}`}>{r.no}</td>
            <td className={`${cell} border-r-black`}>{r.name}</td>
            <td className={cell}>10</td>
            <td className={`${cell} text-center`}>
              <svg viewBox="0 0 10 10" className="inline h-[10px] w-[10px]" role="img" aria-label="三级钢"><path d="M3.500 0v9M6.500 0v9M1 2.500h8v4H1zM2 9.500h6" fill="none" stroke="#111" /></svg>
            </td>
            <td className={`${cell} ${i === 0 ? "bg-[#aee9db]" : ""}`}>64</td>
            <td className={cell}>
              <div className="flex items-center justify-center gap-[2px]">
                150
                <span className="h-[15px] w-[121px] border-2 border-t-0 border-black text-center text-red-600">{r.len}</span>
                150
              </div>
            </td>
            <td className={`${cell} break-all`}>{r.formula}</td>
            <td className={`${cell} whitespace-nowrap`}>净长+设定锚固+设定锚固</td>
            <td className={cell}>{r.total}</td>
          </tr>
        ))}
        <tr className="h-[19px] bg-white">
          <td className={`${cell} bg-linear-to-b from-white to-[#efefef] pr-[8px] text-center`}>4</td>
          <td className={`${cell} border-r-black`} />
          {HEADS.slice(2).map((h) => <td key={h} className={cell} />)}
        </tr>
      </tbody>
    </table>
  );
}

function RebarPanel() {
  return (
    <div className="flex min-h-0 flex-1 pt-[2px]">
      <div className="flex w-[13px] shrink-0 flex-col items-center">
        <button aria-label="关闭" className="flex"><svg viewBox="0 0 10 10" className="h-[10px] w-[10px]"><path d="M.5.500h9v9h-9z" fill="#fff" stroke="#444" /><path d="M1 1h8v2H1z" fill="#8a4a4a" /><path d="M2 2l6 6M8 2L2 8" stroke="#333" strokeWidth="1.500" /></svg></button>
        <div className="mt-1 flex flex-1 gap-[2px]">
          <span className="border-l-2 border-dotted border-[#b4b4b4]" />
          <span className="border-l-2 border-dotted border-[#b4b4b4]" />
        </div>
      </div>
      <div className="flex min-w-0 flex-1 flex-col pb-[3px]">
        <div className="flex h-[27px] shrink-0 overflow-hidden pb-px">
          <Strip className="flex-1">
            <span className="-mr-1 flex items-center"><Tool icon="first" /><Tool icon="prev" /><Tool icon="next" /><Tool icon="last" /></span>
            <Sep />
            <Tool icon="up" />
            <Tool icon="down" />
            <Sep />
            <Tool icon="insert" label="插入" disabled />
            <Tool icon="remove" label="删除" disabled />
            <Tool icon="scale" label="缩尺配筋" />
            <Tool icon="info" label="钢筋信息" />
            <Tool icon="lib" label="钢筋图库" />
            <Tool icon="other" label="其他" />
            <Arrow />
            <button className="pl-[2px] pr-1">关闭</button>
            <Sep />
            <span className="whitespace-nowrap pl-1">单构件钢筋总重(kg)：583.485</span>
          </Strip>
        </div>
        <div className="min-h-0 flex-1 overflow-hidden border-l border-t border-[#a0a0a0] bg-white"><RebarTable /></div>
        <div className="flex h-[15px] shrink-0 items-center bg-[#f0f0f0]">
          <button aria-label="向左" className="flex w-[18px] justify-center"><Chevron dir="left" /></button>
          <div className="h-full w-[58%] bg-[#cdcdcd]" />
        </div>
      </div>
    </div>
  );
}

export default function App() {
  return (
    <div className={`relative flex h-screen w-full flex-col overflow-hidden bg-[#f0f0f0] text-[12px] text-black ${UI_FONT}`}>
      <MenuBar />
      <MainToolbar />
      <div className="flex min-h-0 flex-1">
        <NavPanel />
        <MiddleColumn />
        <main className="ml-[3px] flex min-w-0 flex-1 flex-col">
          <DrawToolbars />
          <div className="relative shrink-0">
            <Plan />
            <ImeBar />
          </div>
          <SnapBar />
          <RebarPanel />
        </main>
      </div>
      {/* red pen mark over the rebar names */}
      <svg viewBox="0 0 152 176" className="pointer-events-none absolute left-[348px] top-[476px] h-[176px] w-[152px]">
        <path d={smooth(NAME_MARK)} fill="none" stroke="#ff3b38" strokeWidth="8" strokeLinejoin="round" strokeLinecap="round" />
      </svg>
    </div>
  );
}
